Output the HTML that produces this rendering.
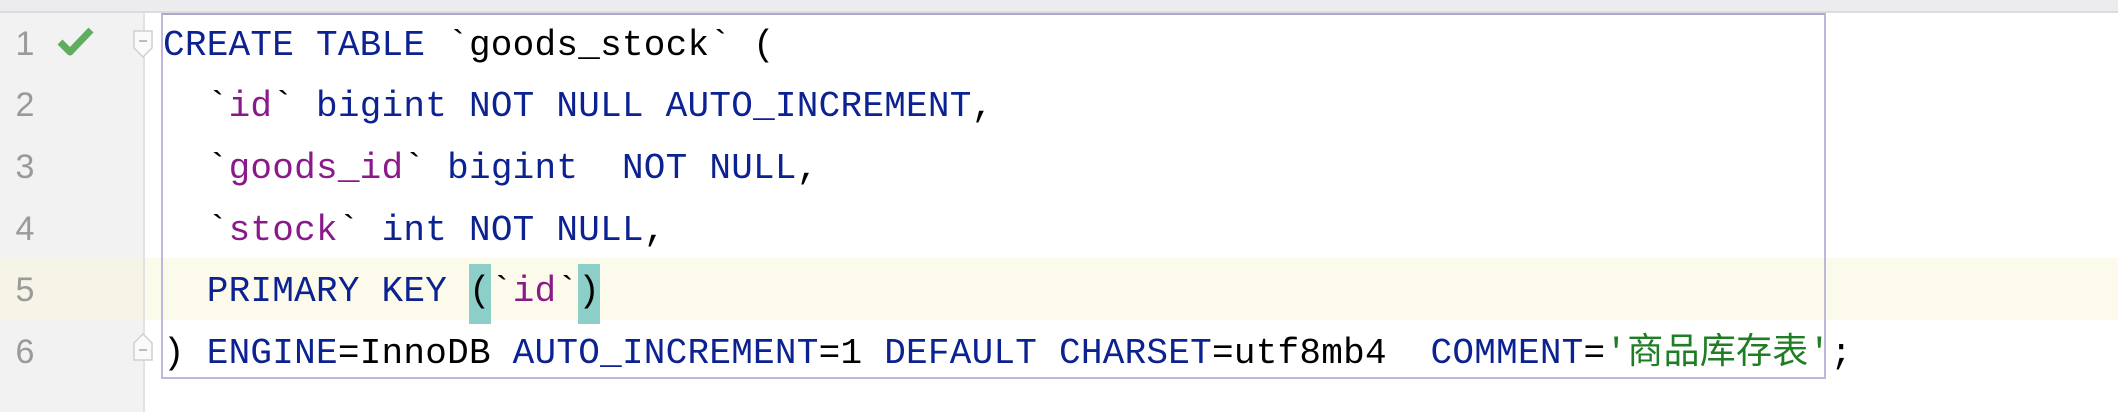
<!DOCTYPE html>
<html><head><meta charset="utf-8"><style>
html,body{margin:0;padding:0;}
body{width:2118px;height:412px;background:#fff;position:relative;overflow:hidden;font-family:"Liberation Mono","Noto Sans CJK SC",monospace;}
.top{position:absolute;left:0;top:0;width:2118px;height:11px;background:#ececee;border-bottom:2px solid #dcdce0;}
.gut{position:absolute;left:0;top:13px;width:143px;height:399px;background:#f2f2f2;}
.gl{position:absolute;left:143px;top:13px;width:2px;height:399px;background:#e2e2e2;}
.hl{position:absolute;left:0;top:258px;width:2118px;height:62px;background:#fcfaea;}
.hlg{position:absolute;left:0;top:258px;width:143px;height:62px;background:#f6f4e6;}
.box{position:absolute;left:161px;top:13px;width:1665px;height:366px;border:2px solid #bdb8dc;border-top-color:#aca8cc;box-sizing:border-box;}
.ln{position:absolute;left:10px;width:30px;text-align:center;font-size:34px;line-height:44px;color:#9a9a9a;font-family:"Liberation Sans",sans-serif;}
.code{position:absolute;left:163px;font-size:36px;line-height:44px;white-space:pre;color:#000;letter-spacing:0.25px;}
.k{color:#0b2290;}
.i{color:#8a1a8a;}
.s{color:#1f7d24;}
.m{background:#8ccfc8;display:inline-block;height:60px;line-height:44px;vertical-align:top;margin-top:-6px;padding-top:6px;box-sizing:border-box;}
.fold{position:absolute;left:133px;width:20px;height:28px;}
</style></head><body>
<div class="top"></div>
<div class="gut"></div>
<div class="hl"></div>
<div class="hlg"></div>
<div class="gl"></div>
<div class="box"></div>

<div class="ln" style="top:22px">1</div>
<div class="ln" style="top:83px">2</div>
<div class="ln" style="top:145px">3</div>
<div class="ln" style="top:207px">4</div>
<div class="ln" style="top:268px">5</div>
<div class="ln" style="top:330px">6</div>

<svg style="position:absolute;left:56px;top:26px" width="40" height="32" viewBox="0 0 40 32"><path d="M4 16 L14 26 L35 4" fill="none" stroke="#5fad5f" stroke-width="7" stroke-linejoin="round"/></svg>

<svg class="fold" style="top:30px" viewBox="0 0 20 28"><path d="M1 1 H19 V18 L10 27 L1 18 Z" fill="#fafafa" stroke="#d0d0d0" stroke-width="1.5"/><path d="M6 11 H14" stroke="#bbb" stroke-width="2"/></svg>
<svg class="fold" style="top:333px" viewBox="0 0 20 28"><path d="M1 27 H19 V10 L10 1 L1 10 Z" fill="#fafafa" stroke="#d0d0d0" stroke-width="1.5"/><path d="M6 17 H14" stroke="#bbb" stroke-width="2"/></svg>

<div class="code" style="top:24px"><span class="k">CREATE TABLE</span> `goods_stock` (</div>
<div class="code" style="top:85px">  `<span class="i">id</span>` <span class="k">bigint NOT NULL AUTO_INCREMENT</span>,</div>
<div class="code" style="top:147px">  `<span class="i">goods_id</span>` <span class="k">bigint  NOT NULL</span>,</div>
<div class="code" style="top:209px">  `<span class="i">stock</span>` <span class="k">int NOT NULL</span>,</div>
<div class="code" style="top:270px">  <span class="k">PRIMARY KEY</span> <span class="m">(</span>`<span class="i">id</span>`<span class="m">)</span></div>
<div class="code" style="top:332px">) <span class="k">ENGINE</span>=InnoDB <span class="k">AUTO_INCREMENT</span>=1 <span class="k">DEFAULT CHARSET</span>=utf8mb4  <span class="k">COMMENT</span>=<span class="s">'商品库存表'</span>;</div>
</body></html>
